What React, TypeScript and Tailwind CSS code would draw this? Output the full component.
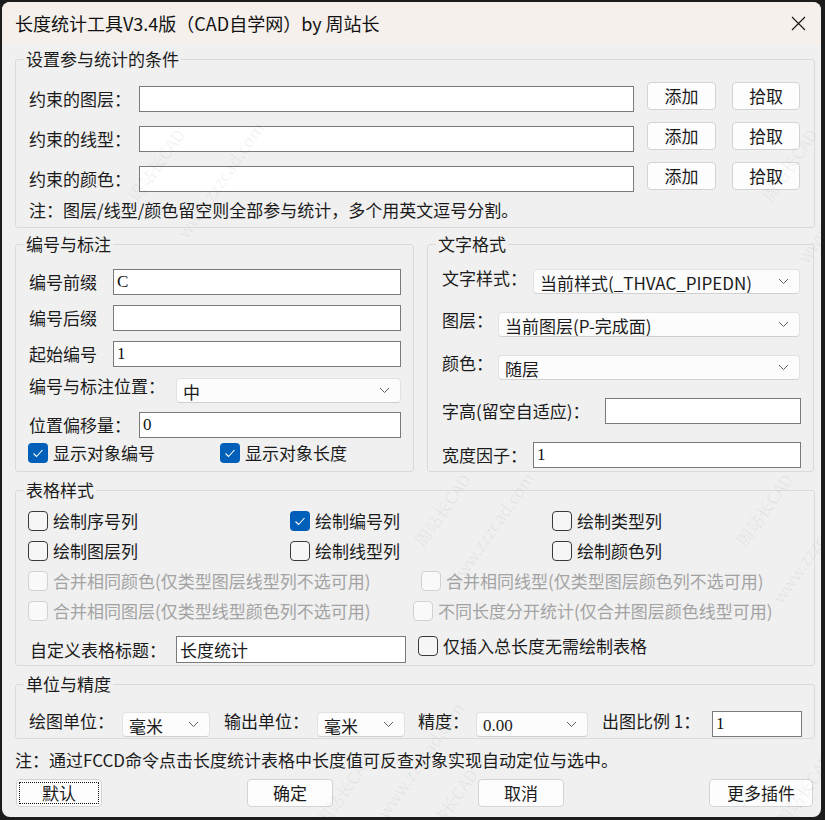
import React from "react";

const cjk = "font-['Noto_Sans_CJK_SC',sans-serif]";
const serif = "font-['Liberation_Serif','Noto_Sans_CJK_SC',serif]";

const Chevron = () => (
  <svg width="11" height="7" viewBox="0 0 11 7" className="shrink-0">
    <path d="M1 1l4.5 4.5L10 1" fill="none" stroke="#5f5f5f" strokeWidth="1" />
  </svg>
);

const TextBox = ({ value = "", className = "" }: { value?: string; className?: string }) => (
  <input
    readOnly
    value={value}
    className={`h-[26px] shrink-0 border border-[#7a7a7a] bg-white px-[3px] text-[17px] text-[#111] outline-none ${serif} ${className}`}
  />
);

const Select = ({ value, className = "" }: { value: string; className?: string }) => (
  <div
    className={`flex h-[25px] shrink-0 items-center justify-between rounded-[4px] border border-[#e2e2e2] border-b-[#d0d0d0] bg-[#fcfcfc] pl-[6px] pr-[10px] text-[17px] ${className}`}
  >
    <span className="whitespace-nowrap leading-[22px] pt-[3px]">{value}</span>
    <Chevron />
  </div>
);

const Btn = ({ children, className = "" }: { children: React.ReactNode; className?: string }) => (
  <button
    className={`flex h-[28px] shrink-0 items-center justify-center rounded-[4px] border border-[#d3d3d3] bg-[#fdfdfd] text-[17px] text-[#1b1b1b] ${className}`}
  >
    {children}
  </button>
);

const Check = ({
  label,
  checked = false,
  disabled = false,
  className = "",
}: {
  label: string;
  checked?: boolean;
  disabled?: boolean;
  className?: string;
}) => (
  <label className={`flex shrink-0 items-center gap-[5px] ${className}`}>
    {checked ? (
      <span className="flex h-[20px] w-[20px] items-center justify-center rounded-[4px] bg-[#005fb8]">
        <svg width="20" height="20" viewBox="0 0 20 20">
          <path d="M5.5 10.5l3 3 6-6.5" fill="none" stroke="#fff" strokeWidth="1.1" />
        </svg>
      </span>
    ) : disabled ? (
      <span className="h-[20px] w-[20px] rounded-[4px] border border-[#d2d2d2] bg-[#f9f9f9]" />
    ) : (
      <span className="h-[20px] w-[20px] rounded-[4px] border border-[#3a3a3a] bg-[#f6f6f6]" />
    )}
    <span className={`text-[17px] ${disabled ? "text-[#a3a3a3]" : "text-[#1b1b1b]"}`}>{label}</span>
  </label>
);

const Legend = ({ children }: { children: React.ReactNode }) => (
  <legend className="ml-[8px] px-[2px] text-[17px] leading-[20px] text-[#1b1b1b]">{children}</legend>
);

const marks = [
  { t: "周站长CAD", c: "left-[112px] top-[150px]" },
  { t: "www.zzzcad.com", c: "left-[150px] top-[165px]" },
  { t: "周站长CAD", c: "left-[398px] top-[495px]" },
  { t: "www.zzzcad.com", c: "left-[420px] top-[515px]" },
  { t: "周站长CAD", c: "left-[745px] top-[150px]" },
  { t: "www.zzzcad.com", c: "left-[770px] top-[190px]" },
  { t: "周站长CAD", c: "left-[720px] top-[495px]" },
  { t: "www.zzzcad.com", c: "left-[745px] top-[530px]" },
  { t: "周站长CAD", c: "left-[300px] top-[775px]" },
  { t: "www.zzzcad.com", c: "left-[350px] top-[745px]" },
  { t: "周站长CAD", c: "left-[405px] top-[790px]" },
  { t: "周站长CAD", c: "left-[760px] top-[775px]" },
];

export default function App() {
  return (
    <div className={`h-[820px] w-[825px] bg-[#1c1c1c] pl-[2px] pt-[2px] ${cjk}`}>
      <div className="relative h-[815px] w-[819px] overflow-hidden rounded-[8px] bg-[#f0f0f0] text-[#1b1b1b]">
        {/* title bar */}
        <div className="flex h-[43px] items-center justify-between bg-[#f5f0ec] pl-[13px] pr-[15px]">
          <span className="text-[18px] text-[#111]">长度统计工具V3.4版（CAD自学网）by 周站长</span>
          <svg width="15" height="15" viewBox="0 0 15 15">
            <path d="M1 1l13 13M14 1L1 14" stroke="#1a1a1a" strokeWidth="1.2" />
          </svg>
        </div>

        <div className="pl-[13px] pt-[4px]">
          {/* filter conditions */}
          <fieldset className="w-[800px] rounded-[3px] border border-[#dadada]">
            <Legend>设置参与统计的条件</Legend>
            <div className="pl-[13px] pt-[10px] pb-[6px] text-[17px]">
              {["约束的图层：", "约束的线型：", "约束的颜色："].map((l) => (
                <div key={l} className="flex h-[40px] items-center">
                  <span className="w-[110px] shrink-0">{l}</span>
                  <TextBox className="w-[495px]" />
                  <div className="mb-[6px] ml-[13px] flex gap-[16px]">
                    <Btn className="w-[69px]">添加</Btn>
                    <Btn className="w-[68px]">拾取</Btn>
                  </div>
                </div>
              ))}
              <div className="flex h-[22px] items-center">注：图层/线型/颜色留空则全部参与统计，多个用英文逗号分割。</div>
            </div>
          </fieldset>

          <div className="mt-[6px] flex items-start gap-[13px]">
            {/* numbering */}
            <fieldset className="w-[399px] rounded-[3px] border border-[#dadada]">
              <Legend>编号与标注</Legend>
              <div className="pl-[13px] pt-[10px] pb-[7px] text-[17px]">
                <div className="flex h-[36px] items-center">
                  <span className="w-[84px] shrink-0">编号前缀</span>
                  <TextBox value="C" className="w-[288px]" />
                </div>
                <div className="flex h-[36px] items-center">
                  <span className="w-[84px] shrink-0">编号后缀</span>
                  <TextBox className="w-[288px]" />
                </div>
                <div className="flex h-[36px] items-center">
                  <span className="w-[84px] shrink-0">起始编号</span>
                  <TextBox value="1" className="w-[288px]" />
                </div>
                <div className="flex h-[36px] items-center">
                  <span className="mb-[8px] w-[147px] shrink-0">编号与标注位置：</span>
                  <Select value="中" className="w-[225px]" />
                </div>
                <div className="flex h-[34px] items-center">
                  <span className="w-[110px] shrink-0">位置偏移量：</span>
                  <TextBox value="0" className="w-[262px]" />
                </div>
                <div className="-ml-[1px] flex h-[22px] items-center">
                  <Check label="显示对象编号" checked className="w-[192px]" />
                  <Check label="显示对象长度" checked />
                </div>
              </div>
            </fieldset>

            {/* text format */}
            <fieldset className="w-[387px] rounded-[3px] border border-[#dadada]">
              <Legend>文字格式</Legend>
              <div className="pl-[14px] pt-[6px] pb-[3px] text-[17px]">
                <div className="flex h-[43px] items-center">
                  <span className="mb-[8px] w-[91px] shrink-0">文字样式：</span>
                  <Select value="当前样式(_THVAC_PIPEDN)" className="w-[267px]" />
                </div>
                <div className="flex h-[43px] items-center">
                  <span className="mb-[9px] w-[56px] shrink-0">图层：</span>
                  <Select value="当前图层(P-完成面)" className="w-[302px]" />
                </div>
                <div className="flex h-[43px] items-center">
                  <span className="mb-[9px] w-[56px] shrink-0">颜色：</span>
                  <Select value="随层" className="w-[302px]" />
                </div>
                <div className="flex h-[44px] items-center">
                  <span className="w-[163px] shrink-0">字高(留空自适应)：</span>
                  <TextBox className="w-[196px]" />
                </div>
                <div className="mt-[9px] flex h-[26px] items-center">
                  <span className="w-[91px] shrink-0">宽度因子：</span>
                  <TextBox value="1" className="w-[268px]" />
                </div>
              </div>
            </fieldset>
          </div>

          {/* table style */}
          <fieldset className="mt-[8px] w-[800px] rounded-[3px] border border-[#dadada]">
            <Legend>表格样式</Legend>
            <div className="pl-[12px] pt-[6px] pb-[2px] text-[17px]">
              <div className="flex h-[30px] items-center">
                <Check label="绘制序号列" className="w-[262px]" />
                <Check label="绘制编号列" checked className="w-[262px]" />
                <Check label="绘制类型列" />
              </div>
              <div className="flex h-[30px] items-center">
                <Check label="绘制图层列" className="w-[262px]" />
                <Check label="绘制线型列" className="w-[262px]" />
                <Check label="绘制颜色列" />
              </div>
              <div className="flex h-[30px] items-center">
                <Check label="合并相同颜色(仅类型图层线型列不选可用)" disabled className="w-[393px]" />
                <Check label="合并相同线型(仅类型图层颜色列不选可用)" disabled />
              </div>
              <div className="flex h-[30px] items-center">
                <Check label="合并相同图层(仅类型线型颜色列不选可用)" disabled className="w-[385px]" />
                <Check label="不同长度分开统计(仅合并图层颜色线型可用)" disabled />
              </div>
              <div className="mt-[10px] flex h-[27px] items-center">
                <span className="ml-[2px] w-[146px] shrink-0">自定义表格标题：</span>
                <input
                  readOnly
                  value="长度统计"
                  className={`h-[27px] w-[230px] shrink-0 border border-[#7a7a7a] bg-white px-[3px] text-[17px] outline-none ${cjk}`}
                />
                <Check label="仅插入总长度无需绘制表格" className="mb-[8px] ml-[12px]" />
              </div>
            </div>
          </fieldset>

          {/* units */}
          <fieldset className="mt-[8px] w-[800px] rounded-[3px] border border-[#dadada]">
            <Legend>单位与精度</Legend>
            <div className="flex h-[44px] items-end pl-[13px] pb-[1px] text-[17px]">
              <div className="flex h-[26px] items-center">
                <span className="mb-[6px] w-[93px] shrink-0">绘图单位：</span>
                <Select value="毫米" className="w-[88px]" />
                <span className="mb-[6px] ml-[14px] w-[93px] shrink-0">输出单位：</span>
                <Select value="毫米" className="w-[88px]" />
                <span className="mb-[6px] ml-[13px] w-[58px] shrink-0">精度：</span>
                <Select value="0.00" className={`w-[112px] ${serif}`} />
                <span className="mb-[6px] ml-[14px] w-[110px] shrink-0">出图比例 1：</span>
                <TextBox value="1" className="w-[90px]" />
              </div>
            </div>
          </fieldset>

          <div className="mt-[10px] flex h-[22px] items-center text-[17px]">
            注：通过FCCD命令点击长度统计表格中长度值可反查对象实现自动定位与选中。
          </div>

          <div className="mt-[8px] ml-[1px] flex w-[797px] justify-between">
            <Btn className="w-[86px] border-[#0067c0] outline-1 outline-offset-[-4px] outline-dotted outline-[#111]">默认</Btn>
            <Btn className="w-[86px]">确定</Btn>
            <Btn className="w-[86px]">取消</Btn>
            <Btn className="w-[104px]">更多插件</Btn>
          </div>
        </div>

        {/* watermark */}
        <div className="pointer-events-none absolute inset-0">
          {marks.map((m, i) => (
            <span
              key={i}
              className={`absolute -rotate-[55deg] whitespace-nowrap text-[17px] text-[#000]/[0.06] ${m.c}`}
            >
              {m.t}
            </span>
          ))}
        </div>
      </div>
    </div>
  );
}
